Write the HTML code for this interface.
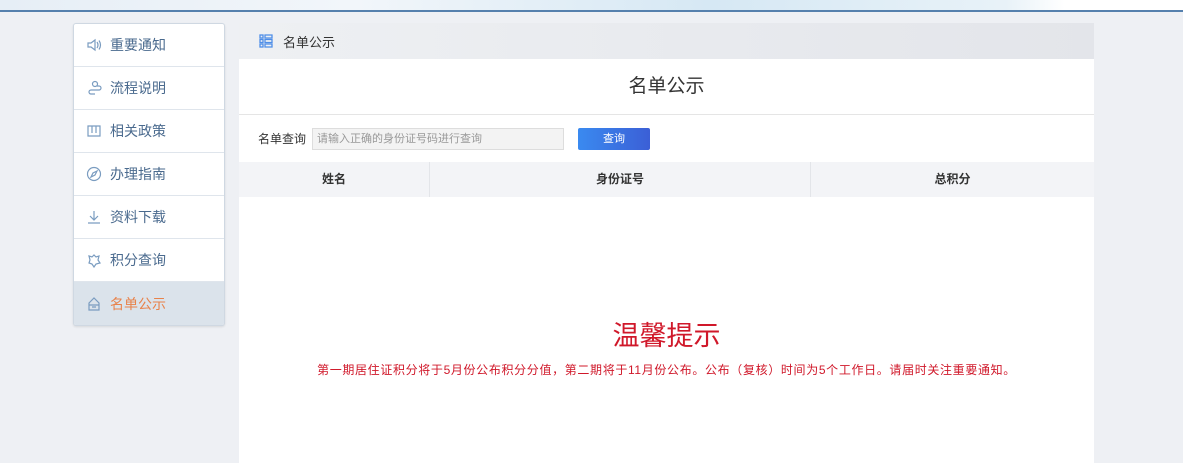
<!DOCTYPE html>
<html><head><meta charset="utf-8"><style>
*{margin:0;padding:0;box-sizing:border-box}
body{width:1183px;height:463px;overflow:hidden;background:#eef0f4;font-family:"Liberation Sans","Noto Sans CJK SC",sans-serif;position:relative}
.top{position:absolute;left:0;top:0;width:1183px;height:10px;background:linear-gradient(90deg,#e6eef6,#f2f6fa 30%,#d6e8f4 60%,#e8f2f8 85%,#fff 90%)}
.line{position:absolute;left:0;top:10px;width:1183px;height:2px;background:#5580ad}
.side{position:absolute;left:73px;top:23px;width:152px;height:303px;background:#fff;border:1px solid #cfd8e2;border-radius:3px;box-shadow:0 1px 2px rgba(0,0,0,.1);overflow:hidden}
.it{height:43px;border-bottom:1px solid #dfe5ec;display:flex;align-items:center;padding-left:12px;font-size:14px;color:#4a6a8e}
.it .ic{width:16px;height:16px;margin-right:8px;display:inline-block}
.it.act{background:#dbe3eb;color:#e8824a;border-bottom:none;height:44px}
.main{position:absolute;left:239px;top:23px;width:855px;height:440px;background:#fff}
.hd{height:36px;background:linear-gradient(90deg,#eef0f3,#e3e5ea);display:flex;align-items:center;padding-left:20px;font-size:13px;color:#333}
.ttl{height:56px;border-bottom:1px solid #e5e5e5;text-align:center;line-height:56px;font-size:19px;color:#333}
.srch{height:47px;display:flex;align-items:center;padding-left:19px;font-size:12px;color:#333}
.inp{width:252px;height:22px;margin-left:6px;border:1px solid #ddd;background:#f3f3f3;color:#999;font-size:11px;line-height:20px;padding-left:4px}
.btn{margin-left:14px;width:72px;height:22px;background:linear-gradient(90deg,#3a8af0,#3b5fd6);color:#fff;font-size:11px;text-align:center;line-height:22px;border-radius:2px}
.th{display:flex;height:35px;background:#f3f4f7;font-size:12px;font-weight:bold;color:#333;line-height:35px;text-align:center}
.th div{border-right:1px solid #e3e5e9}
.tip{position:absolute;left:0;width:855px;text-align:center;color:#d0182a}
</style></head><body>
<div class="top"></div><div class="line"></div>
<div class="side">
<div class="it"><svg class="ic" viewBox="0 0 16 16" fill="none" stroke="#7a9cc0" stroke-width="1.2"><path d="M2 6h3l4-3v10l-4-3H2z"/><path d="M11 5q2 3 0 6M13 3.5q3 4.5 0 9"/></svg>重要通知</div>
<div class="it"><svg class="ic" viewBox="0 0 16 16" fill="none" stroke="#7a9cc0" stroke-width="1.2"><circle cx="9" cy="4" r="2.5"/><path d="M11 6h2a2 2 0 010 4H5a2 2 0 000 4h4"/></svg>流程说明</div>
<div class="it"><svg class="ic" viewBox="0 0 16 16" fill="none" stroke="#7a9cc0" stroke-width="1.2"><path d="M2 3h12v10H2zM6 3v7M10 3v7"/></svg>相关政策</div>
<div class="it"><svg class="ic" viewBox="0 0 16 16" fill="none" stroke="#7a9cc0" stroke-width="1.2"><circle cx="8" cy="8" r="6.5"/><path d="M11 5l-4 2-2 4 4-2z"/></svg>办理指南</div>
<div class="it"><svg class="ic" viewBox="0 0 16 16" fill="none" stroke="#7a9cc0" stroke-width="1.2"><path d="M8 2v9M4 7l4 4 4-4M2 14h12"/></svg>资料下载</div>
<div class="it"><svg class="ic" viewBox="0 0 16 16" fill="none" stroke="#7a9cc0" stroke-width="1.2"><path d="M3 4l3 1 2-2 2 2 3-1-1 4 2 3-4 1-2 3-2-3-3-1 1-3z"/></svg>积分查询</div>
<div class="it act"><svg class="ic" viewBox="0 0 16 16" fill="none" stroke="#7a9cc0" stroke-width="1.2"><path d="M3 7l5-5 5 5v7H3zM3 9h10M6 11h4"/></svg>名单公示</div>
</div>
<div class="main">
<div class="hd"><svg width="14" height="14" viewBox="0 0 14 14" fill="none" stroke="#4e8ee8" stroke-width="1.3" style="margin-right:10px"><rect x="1" y="1" width="3" height="3"/><rect x="1" y="5.5" width="3" height="3"/><rect x="1" y="10" width="3" height="3"/><path d="M6 1h7v3H6zM6 5.5h7v3H6zM6 10h7v3H6z"/></svg>名单公示</div>
<div class="ttl">名单公示</div>
<div class="srch">名单查询<div class="inp">请输入正确的身份证号码进行查询</div><div class="btn">查询</div></div>
<div class="th"><div style="width:191px">姓名</div><div style="width:381px">身份证号</div><div style="width:283px;border:none">总积分</div></div>
<div class="tip" style="top:296px;font-size:27px;line-height:34px">温馨提示</div>
<div class="tip" style="top:339px;font-size:12px;line-height:16px;letter-spacing:0.65px">第一期居住证积分将于5月份公布积分分值，第二期将于11月份公布。公布（复核）时间为5个工作日。请届时关注重要通知。</div>
</div>
</body></html>
